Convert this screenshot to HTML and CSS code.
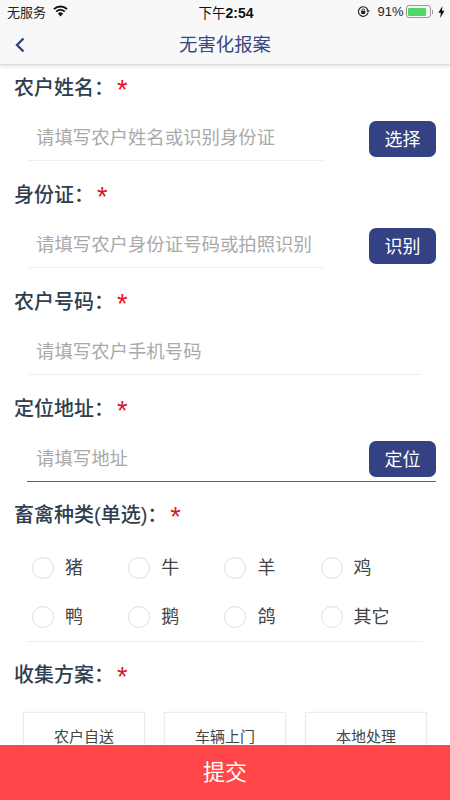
FILE: index.html
```html
<!DOCTYPE html>
<html lang="zh-CN">
  <head>
    <meta charset="UTF-8" />
    <meta name="viewport" content="width=device-width, initial-scale=1.0" />
    <title>无害化报案</title>
    <link rel="stylesheet" href="styles.css">
  </head>
  <body>
    <div class="header">
      <div class="status-bar">
        <div class="status-left">
          <span>无服务</span>
          <svg class="wifi" width="15" height="12" viewBox="0 0 16 12">
            <path d="M8 11.800 5.200 8.700a3.900 3.900 0 0 1 5.600 0z" fill="#111" />
            <path d="M3.500 6.700a6.400 6.400 0 0 1 9 0" fill="none" stroke="#111" stroke-width="2" />
            <path d="M1 4a10 10 0 0 1 14 0" fill="none" stroke="#111" stroke-width="2" />
          </svg>
        </div>
        <div class="status-time">下午<b>2:54</b></div>
        <div class="status-right">
          <svg width="13" height="13" viewBox="0 0 13 13">
            <path d="M10.800 5a4.800 4.800 0 1 0 .1 2.800" fill="none" stroke="#222" stroke-width="1.200" />
            <rect x="4.200" y="5.800" width="4" height="3.200" rx="0.500" fill="#222" />
            <path d="M5 5.800V5a1.200 1.200 0 0 1 2.400 0v.8" fill="none" stroke="#222" stroke-width="0.800" />
            <path d="M9.300 5.200h3.500L11 7.800z" fill="#222" />
          </svg>
          <span class="battery-text">91%</span>
          <div class="battery"><div class="battery-fill"></div></div>
          <div class="battery-cap"></div>
          <svg width="7" height="12" viewBox="0 0 7 12">
            <path d="M4.400 0 .4 6.800h2.400L2.200 12l4.300-7.200H4z" fill="#111" />
          </svg>
        </div>
      </div>
      <div class="nav-bar">
        <svg class="back" width="12" height="18" viewBox="0 0 12 18">
          <path d="M9.500 2.500 3 9l6.500 6.500" fill="none" stroke="#34427f" stroke-width="2.400" />
        </svg>
        <div class="nav-title">无害化报案</div>
      </div>
    </div>

    <div class="content">
      <div class="label">农户姓名：<span class="star">*</span></div>
      <div class="input-row">
        <div class="input short">请填写农户姓名或识别身份证</div>
        <button class="btn">选择</button>
      </div>

      <div class="label">身份证：<span class="star">*</span></div>
      <div class="input-row">
        <div class="input short">请填写农户身份证号码或拍照识别</div>
        <button class="btn">识别</button>
      </div>

      <div class="label">农户号码：<span class="star">*</span></div>
      <div class="input-row">
        <div class="input medium">请填写农户手机号码</div>
      </div>

      <div class="label">定位地址：<span class="star">*</span></div>
      <div class="input-row active">
        <div class="input grow">请填写地址</div>
        <button class="btn">定位</button>
      </div>

      <div class="label">畜禽种类(单选)：<span class="star">*</span></div>
      <div class="radio-grid">
        <div class="radio-item"><span class="radio"></span><span class="radio-text">猪</span></div>
        <div class="radio-item"><span class="radio"></span><span class="radio-text">牛</span></div>
        <div class="radio-item"><span class="radio"></span><span class="radio-text">羊</span></div>
        <div class="radio-item"><span class="radio"></span><span class="radio-text">鸡</span></div>
        <div class="radio-item"><span class="radio"></span><span class="radio-text">鸭</span></div>
        <div class="radio-item"><span class="radio"></span><span class="radio-text">鹅</span></div>
        <div class="radio-item"><span class="radio"></span><span class="radio-text">鸽</span></div>
        <div class="radio-item"><span class="radio"></span><span class="radio-text">其它</span></div>
      </div>

      <div class="label plan-label">收集方案：<span class="star">*</span></div>
      <div class="plans">
        <div class="plan">农户自送</div>
        <div class="plan">车辆上门</div>
        <div class="plan">本地处理</div>
      </div>
    </div>

    <div class="submit">提交</div>
  </body>
</html>
```

FILE: styles.css
```css
html,
body {
  height: 100%;
}
body {
  position: relative;
  margin: 0;
  height: 800px;
  overflow: hidden;
  background: #fff;
  font-family: "Liberation Sans", "Noto Sans CJK SC", sans-serif;
}
.header {
  position: relative;
  z-index: 2;
  height: 65px;
  background: #f8f8f8;
  border-bottom: 1px solid #dcdcdc;
  box-shadow: 0 1px 4px rgba(0, 0, 0, 0.15);
  box-sizing: border-box;
}
.status-bar {
  display: grid;
  grid-template-columns: 1fr auto 1fr;
  align-items: center;
  height: 23px;
  padding: 0 5px 0 7px;
  font-size: 13px;
  color: #222;
}
.status-left {
  display: flex;
  align-items: center;
  gap: 7px;
}
.wifi {
  margin-top: -2px;
}
.status-time {
  font-size: 13.500px;
  color: #111;
}
.status-time b {
  font-size: 14px;
}
.status-right {
  display: flex;
  align-items: center;
  justify-content: flex-end;
}
.battery-text {
  margin: 0 2px 0 7px;
  font-size: 13px;
}
.battery {
  box-sizing: border-box;
  width: 25px;
  height: 13px;
  padding: 1.500px;
  border: 1px solid #999;
  border-radius: 3px;
}
.battery-fill {
  width: 91%;
  height: 100%;
  background: #4cd964;
  border-radius: 1px;
}
.battery-cap {
  width: 1.500px;
  height: 4px;
  margin: 0 5px 0 1px;
  background: #999;
}
.nav-bar {
  position: relative;
  display: flex;
  align-items: center;
  justify-content: center;
  height: 41px;
}
.back {
  position: absolute;
  left: 14px;
  top: 13px;
}
.nav-title {
  padding-bottom: 2px;
  font-size: 18.400px;
  color: #3a4683;
}
.content {
  padding: 10px 14px 0 14px;
}
.label {
  display: flex;
  align-items: flex-start;
  height: 26px;
  line-height: 26px;
  font-size: 20px;
  font-weight: 500;
  color: #2f3e4e;
}
.star {
  margin-left: 3px;
  font-size: 27px;
  line-height: 30px;
  font-weight: normal;
  color: #e5141c;
}
.input-row {
  display: flex;
  align-items: flex-start;
  justify-content: space-between;
  height: 41px;
  margin: 19px 0 21px;
  padding-left: 14px;
}
.input {
  box-sizing: border-box;
  height: 41px;
  padding: 5px 0 0 8px;
  line-height: 26px;
  font-size: 18.400px;
  color: #a9a9a9;
  border-bottom: 1px solid #eeeeee;
}
.short {
  width: 295px;
}
.medium {
  width: 393px;
}
.grow {
  flex: 1;
  height: 39px;
  padding: 6px 0 0 9px;
  border-bottom: 0;
}
.active {
  box-sizing: border-box;
  height: 42px;
  margin: 18px 0 20px 13px;
  padding-left: 0;
  border-bottom: 1.500px solid #555e95;
}
.btn {
  width: 67px;
  height: 36px;
  margin-top: 1px;
  padding: 0 0 2px;
  border: none;
  border-radius: 7px;
  background: #344183;
  color: #fff;
  font-family: inherit;
  font-size: 18px;
}
.radio-grid {
  display: grid;
  grid-template-columns: repeat(4, 96.200px);
  grid-auto-rows: 49px;
  width: 396px;
  height: 99px;
  margin: 15px 0 0 13px;
  padding-left: 5px;
  box-sizing: border-box;
  border-bottom: 1px solid #eeeeee;
}
.radio-item {
  display: flex;
  align-items: center;
  gap: 11px;
  height: 49px;
  font-size: 18px;
  color: #444;
}
.radio-text {
  padding-bottom: 4px;
}
.radio {
  box-sizing: border-box;
  width: 22px;
  height: 22px;
  border: 1px solid #dedede;
  border-radius: 50%;
  flex-shrink: 0;
}
.plan-label {
  margin-top: 20px;
}
.plans {
  display: flex;
  gap: 19px;
  margin: 24px 0 0 9px;
}
.plan {
  box-sizing: border-box;
  width: 122px;
  height: 48px;
  padding-top: 12px;
  line-height: 24px;
  font-size: 15px;
  color: #444;
  text-align: center;
  border: 1px solid #ececec;
  box-shadow: 0 0 2px rgba(0, 0, 0, 0.06);
}
.submit {
  position: absolute;
  left: 0;
  right: 0;
  bottom: 0;
  height: 55px;
  line-height: 55px;
  background: #ff4648;
  color: #fff;
  font-size: 22px;
  text-align: center;
}
```
